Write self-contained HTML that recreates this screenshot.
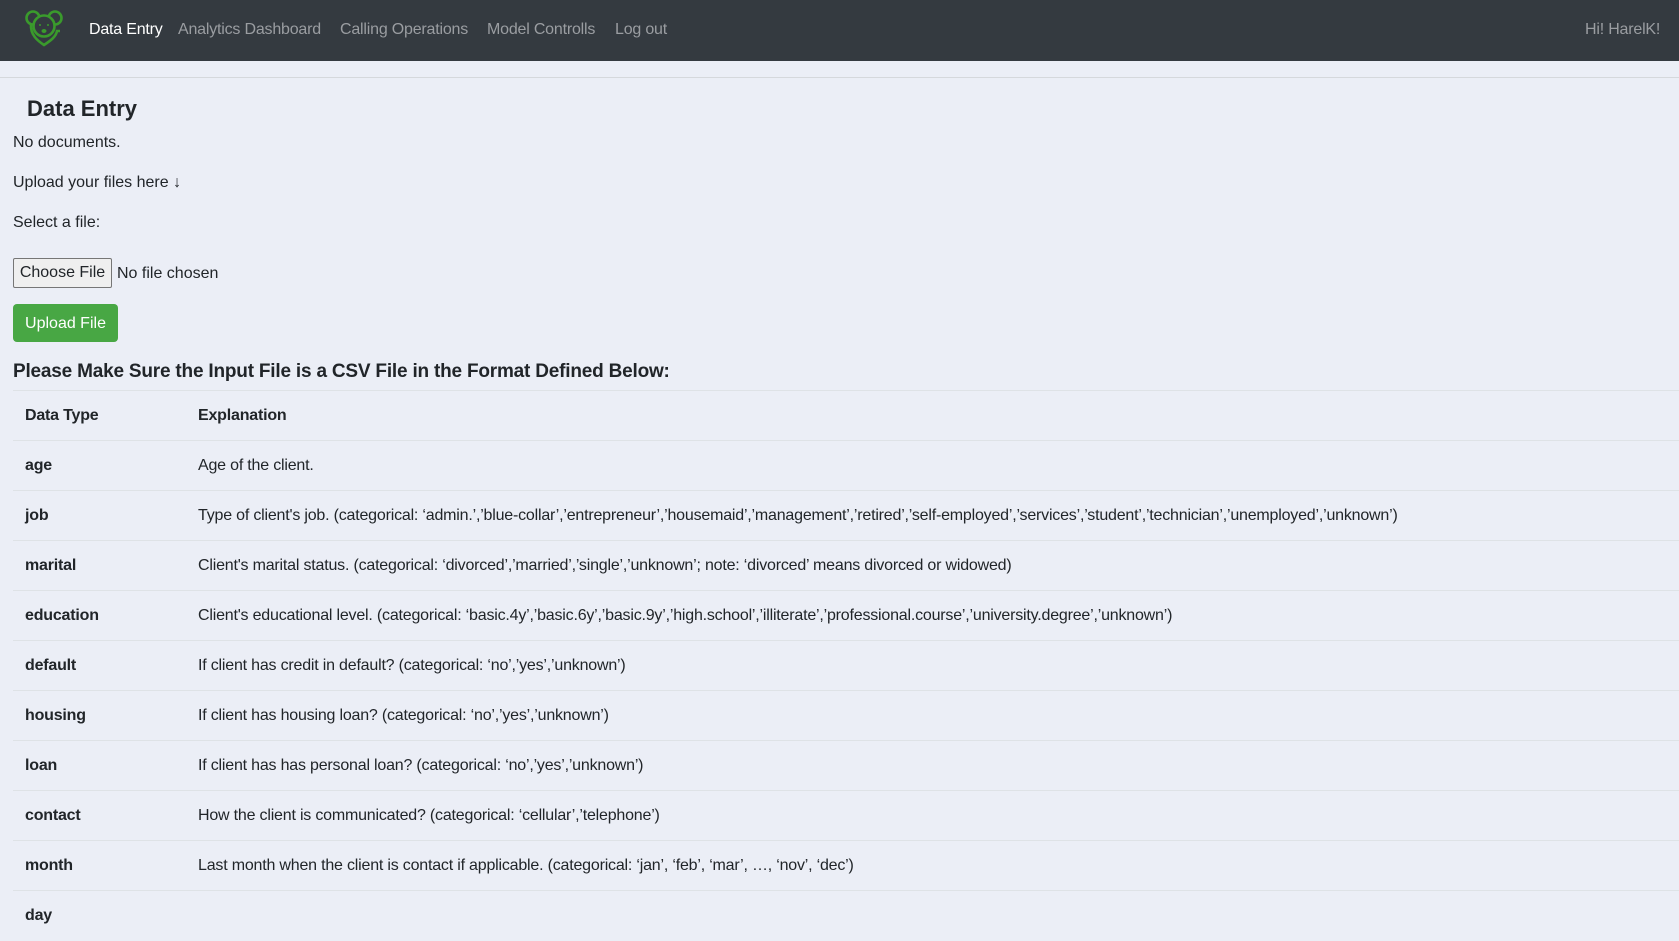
<!DOCTYPE html>
<html><head><meta charset="utf-8"><style>
*{box-sizing:border-box;margin:0;padding:0}
body{width:1679px;height:893px;overflow:hidden;background:#ebeef6;font-family:"Liberation Sans",sans-serif;color:#212529;font-size:16px}
.nav{height:61px;background:#343a40;position:relative}
.nav a{position:absolute;top:21px;font-size:16px;color:#9a9da1;text-decoration:none;letter-spacing:-0.2px}
.hr{position:absolute;top:77px;left:0;right:0;height:1px;background:#d5d8dc}
.t{position:absolute;white-space:nowrap}
table{position:absolute;left:13px;top:390px;width:1666px;border-collapse:collapse}
td{height:50px;border-top:1px solid #dee2e6;font-size:16px;padding:0 12px;vertical-align:middle;letter-spacing:-0.2px}
td:first-child{width:173px;font-weight:bold}
tr.h td{font-weight:bold}
</style></head><body>
<div class="nav">
<svg style="position:absolute;left:24px;top:9px" width="40" height="38" viewBox="0 0 40 38" fill="none" stroke="#3a9a2c" stroke-width="2.6">
<circle cx="9" cy="9" r="6.5"/><circle cx="31" cy="9" r="6.5"/>
<path d="M7 15 C6 26 14 32 20 36 C26 32 32 28 33 22 L36 22"/>
<circle cx="20" cy="17" r="10.5" fill="#343a40"/>
<circle cx="16" cy="16" r="1" fill="#3a9a2c" stroke="none"/><circle cx="24" cy="16" r="1" fill="#3a9a2c" stroke="none"/>
<ellipse cx="20" cy="22" rx="2.5" ry="2" fill="#3a9a2c" stroke="none"/>
</svg>
<a style="left:89px;color:#fff">Data Entry</a>
<a style="left:178px">Analytics Dashboard</a>
<a style="left:340px">Calling Operations</a>
<a style="left:487px">Model Controlls</a>
<a style="left:615px">Log out</a>
<a style="left:1585px">Hi! HarelK!</a>
</div>
<div class="hr"></div>
<div class="t" style="left:27px;top:96px;font-size:22px;font-weight:bold">Data Entry</div>
<div class="t" style="left:13px;top:134px">No documents.</div>
<div class="t" style="left:13px;top:174px">Upload your files here ↓</div>
<div class="t" style="left:13px;top:214px">Select a file:</div>
<div class="t" style="left:13px;top:258px;width:99px;height:30px;border:1px solid #767676;border-radius:2px;background:#efefef;font-size:16px;line-height:28px;text-align:center">Choose File</div>
<div class="t" style="left:117px;top:265px">No file chosen</div>
<div class="t" style="left:13px;top:304px;width:105px;height:38px;border-radius:4px;background:#48a744;color:#fff;line-height:39px;text-align:center">Upload File</div>
<div class="t" style="left:13px;top:361px;font-size:19px;font-weight:bold;letter-spacing:-0.2px">Please Make Sure the Input File is a CSV File in the Format Defined Below:</div>
<table>
<tr class="h"><td>Data Type</td><td>Explanation</td></tr>
<tr><td>age</td><td>Age of the client.</td></tr>
<tr><td>job</td><td>Type of client's job. (categorical: ‘admin.’,’blue-collar’,’entrepreneur’,’housemaid’,’management’,’retired’,’self-employed’,’services’,’student’,’technician’,’unemployed’,’unknown’)</td></tr>
<tr><td>marital</td><td>Client's marital status. (categorical: ‘divorced’,’married’,’single’,’unknown’; note: ‘divorced’ means divorced or widowed)</td></tr>
<tr><td>education</td><td>Client's educational level. (categorical: ‘basic.4y’,’basic.6y’,’basic.9y’,’high.school’,’illiterate’,’professional.course’,’university.degree’,’unknown’)</td></tr>
<tr><td>default</td><td>If client has credit in default? (categorical: ‘no’,’yes’,’unknown’)</td></tr>
<tr><td>housing</td><td>If client has housing loan? (categorical: ‘no’,’yes’,’unknown’)</td></tr>
<tr><td>loan</td><td>If client has has personal loan? (categorical: ‘no’,’yes’,’unknown’)</td></tr>
<tr><td>contact</td><td>How the client is communicated? (categorical: ‘cellular’,’telephone’)</td></tr>
<tr><td>month</td><td>Last month when the client is contact if applicable. (categorical: ‘jan’, ‘feb’, ‘mar’, …, ‘nov’, ‘dec’)</td></tr>
<tr><td>day</td><td></td></tr>
</table>
</body></html>
